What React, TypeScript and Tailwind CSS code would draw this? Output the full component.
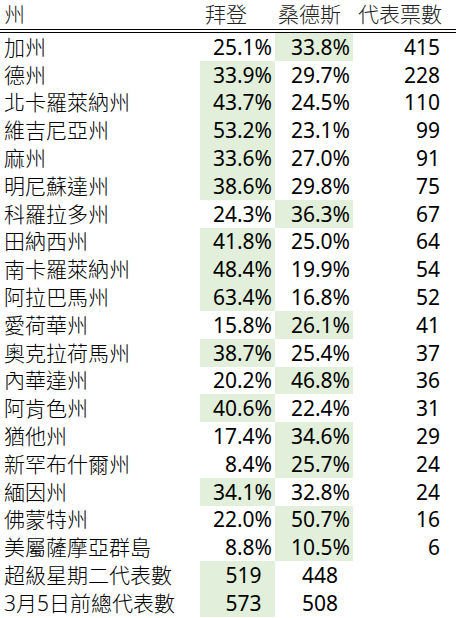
const rows: [string, string, string, string, "b" | "s"][] = [
  ["加州", "25.1%", "33.8%", "415", "s"],
  ["德州", "33.9%", "29.7%", "228", "b"],
  ["北卡羅萊納州", "43.7%", "24.5%", "110", "b"],
  ["維吉尼亞州", "53.2%", "23.1%", "99", "b"],
  ["麻州", "33.6%", "27.0%", "91", "b"],
  ["明尼蘇達州", "38.6%", "29.8%", "75", "b"],
  ["科羅拉多州", "24.3%", "36.3%", "67", "s"],
  ["田納西州", "41.8%", "25.0%", "64", "b"],
  ["南卡羅萊納州", "48.4%", "19.9%", "54", "b"],
  ["阿拉巴馬州", "63.4%", "16.8%", "52", "b"],
  ["愛荷華州", "15.8%", "26.1%", "41", "s"],
  ["奧克拉荷馬州", "38.7%", "25.4%", "37", "b"],
  ["內華達州", "20.2%", "46.8%", "36", "s"],
  ["阿肯色州", "40.6%", "22.4%", "31", "b"],
  ["猶他州", "17.4%", "34.6%", "29", "s"],
  ["新罕布什爾州", "8.4%", "25.7%", "24", "s"],
  ["緬因州", "34.1%", "32.8%", "24", "b"],
  ["佛蒙特州", "22.0%", "50.7%", "16", "s"],
  ["美屬薩摩亞群島", "8.8%", "10.5%", "6", "s"],
];

const totals: [string, string, string][] = [
  ["超級星期二代表數", "519", "448"],
  ["3月5日前總代表數", "573", "508"],
];

export default function App() {
  return (
    <div
      className="w-[456px] h-[618px] bg-white text-black text-[21px] leading-none overflow-hidden"
      style={{ fontFamily: '"Noto Sans", "Noto Sans CJK TC", sans-serif' }}
    >
      <div className="grid grid-cols-[200px_75px_78px_1fr] h-[33px] border-b-4 border-double border-black text-[#222] font-light">
        <div className="pl-[4px] pt-[4px]">州</div>
        <div className="pl-[5px] pt-[4px]">拜登</div>
        <div className="pl-[3px] pt-[4px]">桑德斯</div>
        <div className="pl-[5px] pt-[4px]">代表票數</div>
      </div>
      {rows.map(([name, b, s, v, win]) => (
        <div key={name} className="grid grid-cols-[200px_75px_78px_1fr] h-[27.8px]">
          <div className="pl-[4px] pt-[1px] flex items-center font-light">{name}</div>
          <div className={`flex items-center justify-end pr-[3px] pt-[1px] ${win === "b" ? "bg-[#e2efda]" : ""}`}>{b}</div>
          <div className={`flex items-center justify-end pr-[3px] pt-[1px] ${win === "s" ? "bg-[#e2efda]" : ""}`}>{s}</div>
          <div className="flex items-center justify-end pr-[16px] pt-[1px]">{v}</div>
        </div>
      ))}
      {totals.map(([name, b, s]) => (
        <div key={name} className="grid grid-cols-[200px_75px_78px_1fr] h-[27.8px]">
          <div className="pl-[4px] pt-[1px] flex items-center font-light">{name}</div>
          <div className="flex items-center justify-center pl-[12px] pt-[1px] bg-[#e2efda]">{b}</div>
          <div className="flex items-center justify-center pl-[12px] pt-[1px]">{s}</div>
          <div />
        </div>
      ))}
    </div>
  );
}
